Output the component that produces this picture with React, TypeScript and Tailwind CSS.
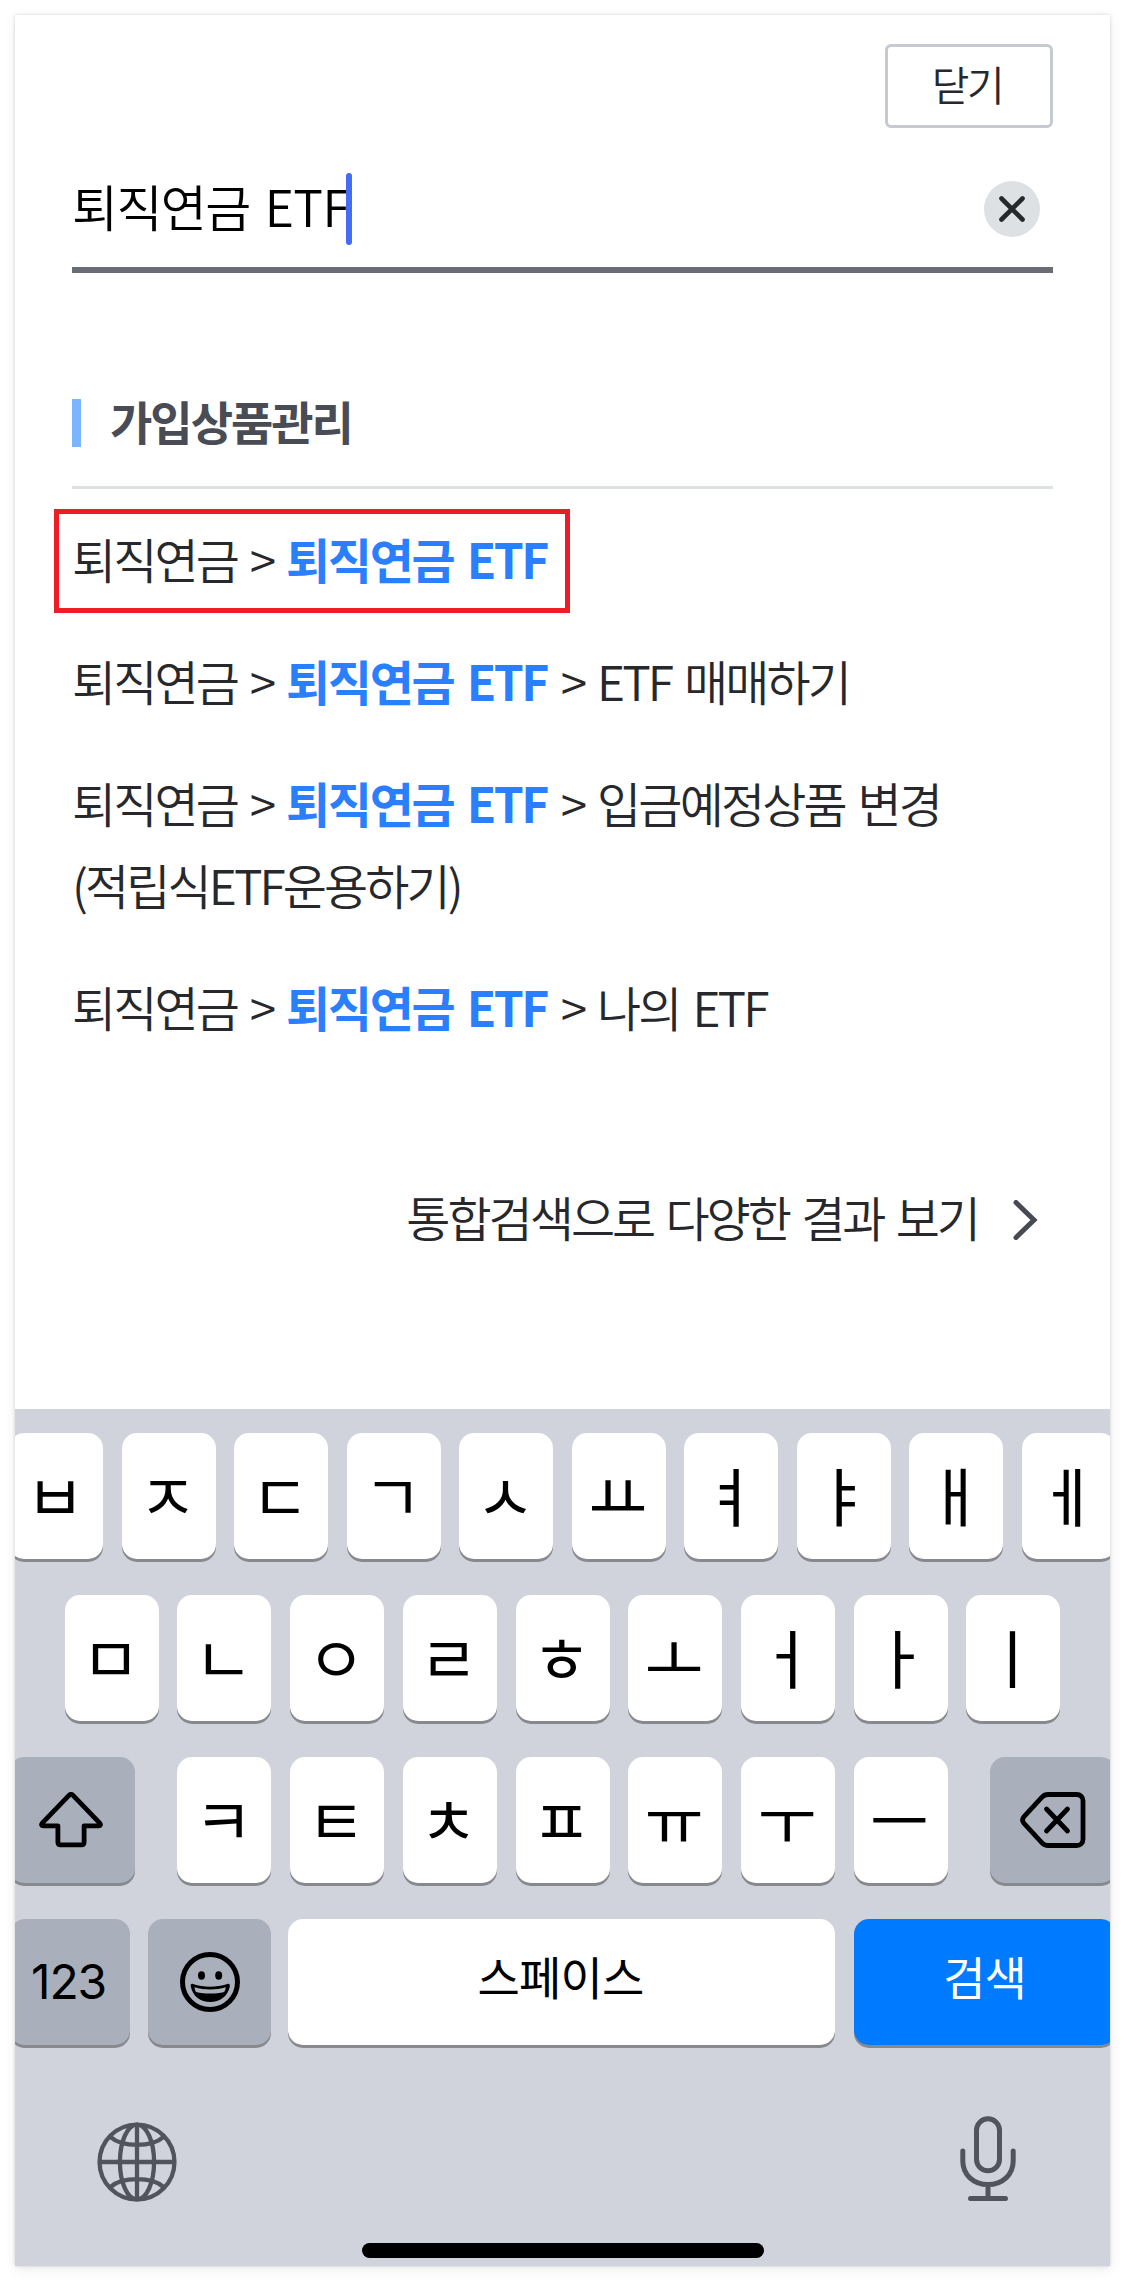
import type { ReactNode } from 'react'

interface ResultItem {
  tail?: string
  boxed?: boolean
}

const results: ResultItem[] = [
  { boxed: true },
  { tail: 'ETF 매매하기' },
  { tail: '입금예정상품 변경 (적립식ETF운용하기)' },
  { tail: '나의 ETF' },
]

const row1 = ['ㅂ', 'ㅈ', 'ㄷ', 'ㄱ', 'ㅅ', 'ㅛ', 'ㅕ', 'ㅑ', 'ㅐ', 'ㅔ']
const row2 = ['ㅁ', 'ㄴ', 'ㅇ', 'ㄹ', 'ㅎ', 'ㅗ', 'ㅓ', 'ㅏ', 'ㅣ']
const row3 = ['ㅋ', 'ㅌ', 'ㅊ', 'ㅍ', 'ㅠ', 'ㅜ', 'ㅡ']

interface KeyProps {
  children: ReactNode
  className?: string
}

function Key({ children, className = 'w-[94px] bg-white' }: KeyProps) {
  return (
    <button
      className={`flex h-[126px] shrink-0 items-center justify-center rounded-[15px] text-black shadow-[0_3px_0_#88898e] ${className}`}
    >
      {children}
    </button>
  )
}

function Jamo({ char }: { char: string }) {
  return (
    <Key>
      <span className="pr-[2px] pb-[7px] text-[64px] leading-none font-normal">{char}</span>
    </Key>
  )
}

function ClearIcon() {
  return (
    <svg width="56" height="56" viewBox="0 0 56 56" fill="none">
      <circle cx="28" cy="28" r="28" fill="#dde1e4" />
      <path d="M17.5 17.5l21 21M38.5 17.5l-21 21" stroke="#27282c" strokeWidth="4.6" strokeLinecap="round" />
    </svg>
  )
}

function ShiftIcon() {
  return (
    <svg width="64" height="56" viewBox="0 0 64 56" fill="none" stroke="#000" strokeWidth="4.8" strokeLinejoin="round">
      <path d="M30.2 3.2 3.2 31.2c-1.2 1.4-.6 2.6 1 2.6h14.7v16.4c0 1.7 1 2.6 2.6 2.6h21c1.7 0 2.6-1 2.6-2.6V33.8h14.7c1.6 0 2.2-1.2 1-2.6L33.8 3.2c-1.2-1.2-2.4-1.2-3.6 0Z" />
    </svg>
  )
}

function DeleteIcon() {
  return (
    <svg width="66" height="56" viewBox="0 0 66 56" fill="none" stroke="#000" strokeWidth="4.8" strokeLinecap="round" strokeLinejoin="round">
      <path d="M28 2.5h28.5c4 0 6.5 2.3 6.5 6.3v38.4c0 4-2.5 6.3-6.5 6.3H28c-2.6 0-4.2-.8-6-2.7L4 31.4c-2-2.3-2-4.5 0-6.8L22 5.2c1.8-1.9 3.4-2.7 6-2.7Z" />
      <path d="M26.5 17l21 22M47.5 17l-21 22" />
    </svg>
  )
}

function EmojiIcon() {
  return (
    <svg width="60" height="60" viewBox="0 0 60 60" fill="none">
      <circle cx="30" cy="30" r="27.5" stroke="#000" strokeWidth="5" />
      <ellipse cx="21.5" cy="23.5" rx="3.5" ry="4.2" fill="#000" />
      <ellipse cx="38.7" cy="23.5" rx="3.5" ry="4.2" fill="#000" />
      <path d="M13 32c11 3.6 23 3.6 34.5 0 2-.6 2.6.8 2.2 3C47.5 44.5 40 50 30.2 50S13 44.5 10.9 35c-.5-2.2.1-3.6 2.1-3Z" fill="#000" />
      <path d="M14.5 35.3c10.5 3 21 3 31.3 0-.2 2-.7 3.2-1.6 4.6-9 2.2-19 2.2-28.2 0-.9-1.4-1.3-2.6-1.5-4.6Z" fill="#a9afbb" />
    </svg>
  )
}

function GlobeIcon() {
  return (
    <svg width="80" height="80" viewBox="0 0 82 82" fill="none" stroke="#51545c" strokeWidth="4.4">
      <circle cx="41" cy="41" r="38.4" />
      <ellipse cx="41" cy="41" rx="17.5" ry="38.4" />
      <path d="M41 2.6v76.8M2.6 41h76.8M14 15.5c12 10.500 42 10.500 54 0M14 66.500c12-10.500 42-10.500 54 0" />
    </svg>
  )
}

function MicIcon() {
  return (
    <svg width="56" height="86" viewBox="0 0 56 86" fill="none" stroke="#51545c" strokeWidth="5" strokeLinecap="round">
      <rect x="16.5" y="2.8" width="23" height="52" rx="11.5" />
      <path d="M2.8 35v10c0 13.5 10.5 23.5 25.2 23.5s25.2-10 25.2-23.5V35M28 68.5V82M10.5 82.500h35" />
    </svg>
  )
}

function Keyboard() {
  return (
    <div className="flex h-[857px] flex-col bg-[#d0d3dc] pt-6">
      <div className="flex justify-center gap-[18.5px]">
        {row1.map((c) => (
          <Jamo key={c} char={c} />
        ))}
      </div>
      <div className="mt-9 flex justify-center gap-[18.7px]">
        {row2.map((c) => (
          <Jamo key={c} char={c} />
        ))}
      </div>
      <div className="mt-9 flex justify-center gap-[42px]">
        <Key className="w-[126px] bg-[#a9afbb]">
          <span className="-ml-[2px]">
            <ShiftIcon />
          </span>
        </Key>
        <div className="flex gap-[18.7px]">
          {row3.map((c) => (
            <Jamo key={c} char={c} />
          ))}
        </div>
        <Key className="w-[126px] bg-[#a9afbb]">
          <DeleteIcon />
        </Key>
      </div>
      <div className="mt-9 flex justify-center">
        <Key className="w-[120px] bg-[#a9afbb]">
          <span className="pr-[2px] font-['Inter','Liberation_Sans',sans-serif] text-[48px] leading-none tracking-[-1.2px]">
            123
          </span>
        </Key>
        <Key className="ml-[18.5px] w-[123px] bg-[#a9afbb]">
          <EmojiIcon />
        </Key>
        <Key className="ml-[17px] w-[547px] bg-white">
          <span className="pr-[2px] pb-[15px] text-[46px] leading-none tracking-[-0.8px]">스페이스</span>
        </Key>
        <Key className="ml-[18.5px] w-[262px] bg-[#007aff]">
          <span className="pb-[15px] text-[46px] leading-none tracking-[-1px] text-white">검색</span>
        </Key>
      </div>

      {/* Bottom bar */}
      <div className="mt-[71px] flex justify-between pr-[94px] pl-[82px]">
        <span className="pt-1.5">
          <GlobeIcon />
        </span>
        <MicIcon />
      </div>
      <div className="mx-auto mt-auto mb-2 h-[15px] w-[402px] rounded-full bg-black" />
    </div>
  )
}

export default function App() {
  return (
    <div className="h-[2282px] w-[1125px] overflow-hidden bg-white p-[15px] font-['Noto_Sans_CJK_KR','Noto_Sans',sans-serif]">
      <div className="flex h-[2251px] w-[1095px] flex-col shadow-[0_0_3px_rgba(0,0,0,0.16),0_3px_12px_rgba(0,0,0,0.08)]">
        <div className="flex h-[2251px] flex-col overflow-hidden bg-white">
          <main className="flex h-[1394px] flex-col px-[57px] pt-[29px] font-[350] break-keep text-[#27282c]">
            <button className="flex h-[84px] w-[168px] items-center justify-center self-end rounded-[6px] border-3 border-[#c5cad0] pr-[4px] pb-[5px] text-[41px] leading-none tracking-[-2.5px]">
              닫기
            </button>

            {/* Search field */}
            <div className="mt-[23px] flex h-[122px] items-center justify-between border-b-6 border-[#6a6c75] pr-[13px]">
              <div className="flex w-[280px] items-center">
                <span className="w-[274px] pb-[9px] text-[50px] leading-none tracking-[-1.6px] whitespace-nowrap text-black [word-spacing:5.5px]">
                  퇴직연금 <span className="tracking-[-0.5px]">ETF</span>
                </span>
                <span className="h-[72px] w-[6px] shrink-0 rounded-full bg-[#466cf3]" />
              </div>
              <ClearIcon />
            </div>

            <div className="mt-[84px] flex h-[132px] items-center border-b-3 border-[#dde1e4] pt-[3px]">
              <span className="h-12 w-[9px] bg-[#7bb5ff]" />
              <h2 className="ml-[29px] pb-[6px] text-[46px] leading-none font-bold tracking-[-2px] text-[#494c54]">가입상품관리</h2>
            </div>

            <ul className="mt-7 flex flex-col gap-10 [word-spacing:5px]">
              {results.map(({ tail, boxed }, i) => (
                <li key={i} className="relative w-[900px] text-[48px] leading-[82px] tracking-[-2.9px]">
                  퇴직연금 &gt;{' '}
                  <b className="mr-px font-bold tracking-[-2.4px] text-[#2a7fff]">퇴직연금 ETF</b>
                  {tail && ` > ${tail}`}
                  {boxed && <span className="absolute -top-2 -left-[18px] h-[104px] w-[516px] border-5 border-[#ee1c25]" />}
                </li>
              ))}
            </ul>

            <a className="mt-[128px] flex h-[82px] items-center justify-end pr-[15px] text-[48px] leading-none tracking-[-3px] [word-spacing:4.5px]">
              통합검색으로 다양한 결과 보기
              <svg className="mt-2 ml-[35px]" width="25" height="40" viewBox="0 0 25 40" fill="none">
                <path d="M3 2.5 21 20 3 37.5" stroke="#474a52" strokeWidth="5" strokeLinecap="round" />
              </svg>
            </a>
          </main>
          <Keyboard />
        </div>
      </div>
    </div>
  )
}
